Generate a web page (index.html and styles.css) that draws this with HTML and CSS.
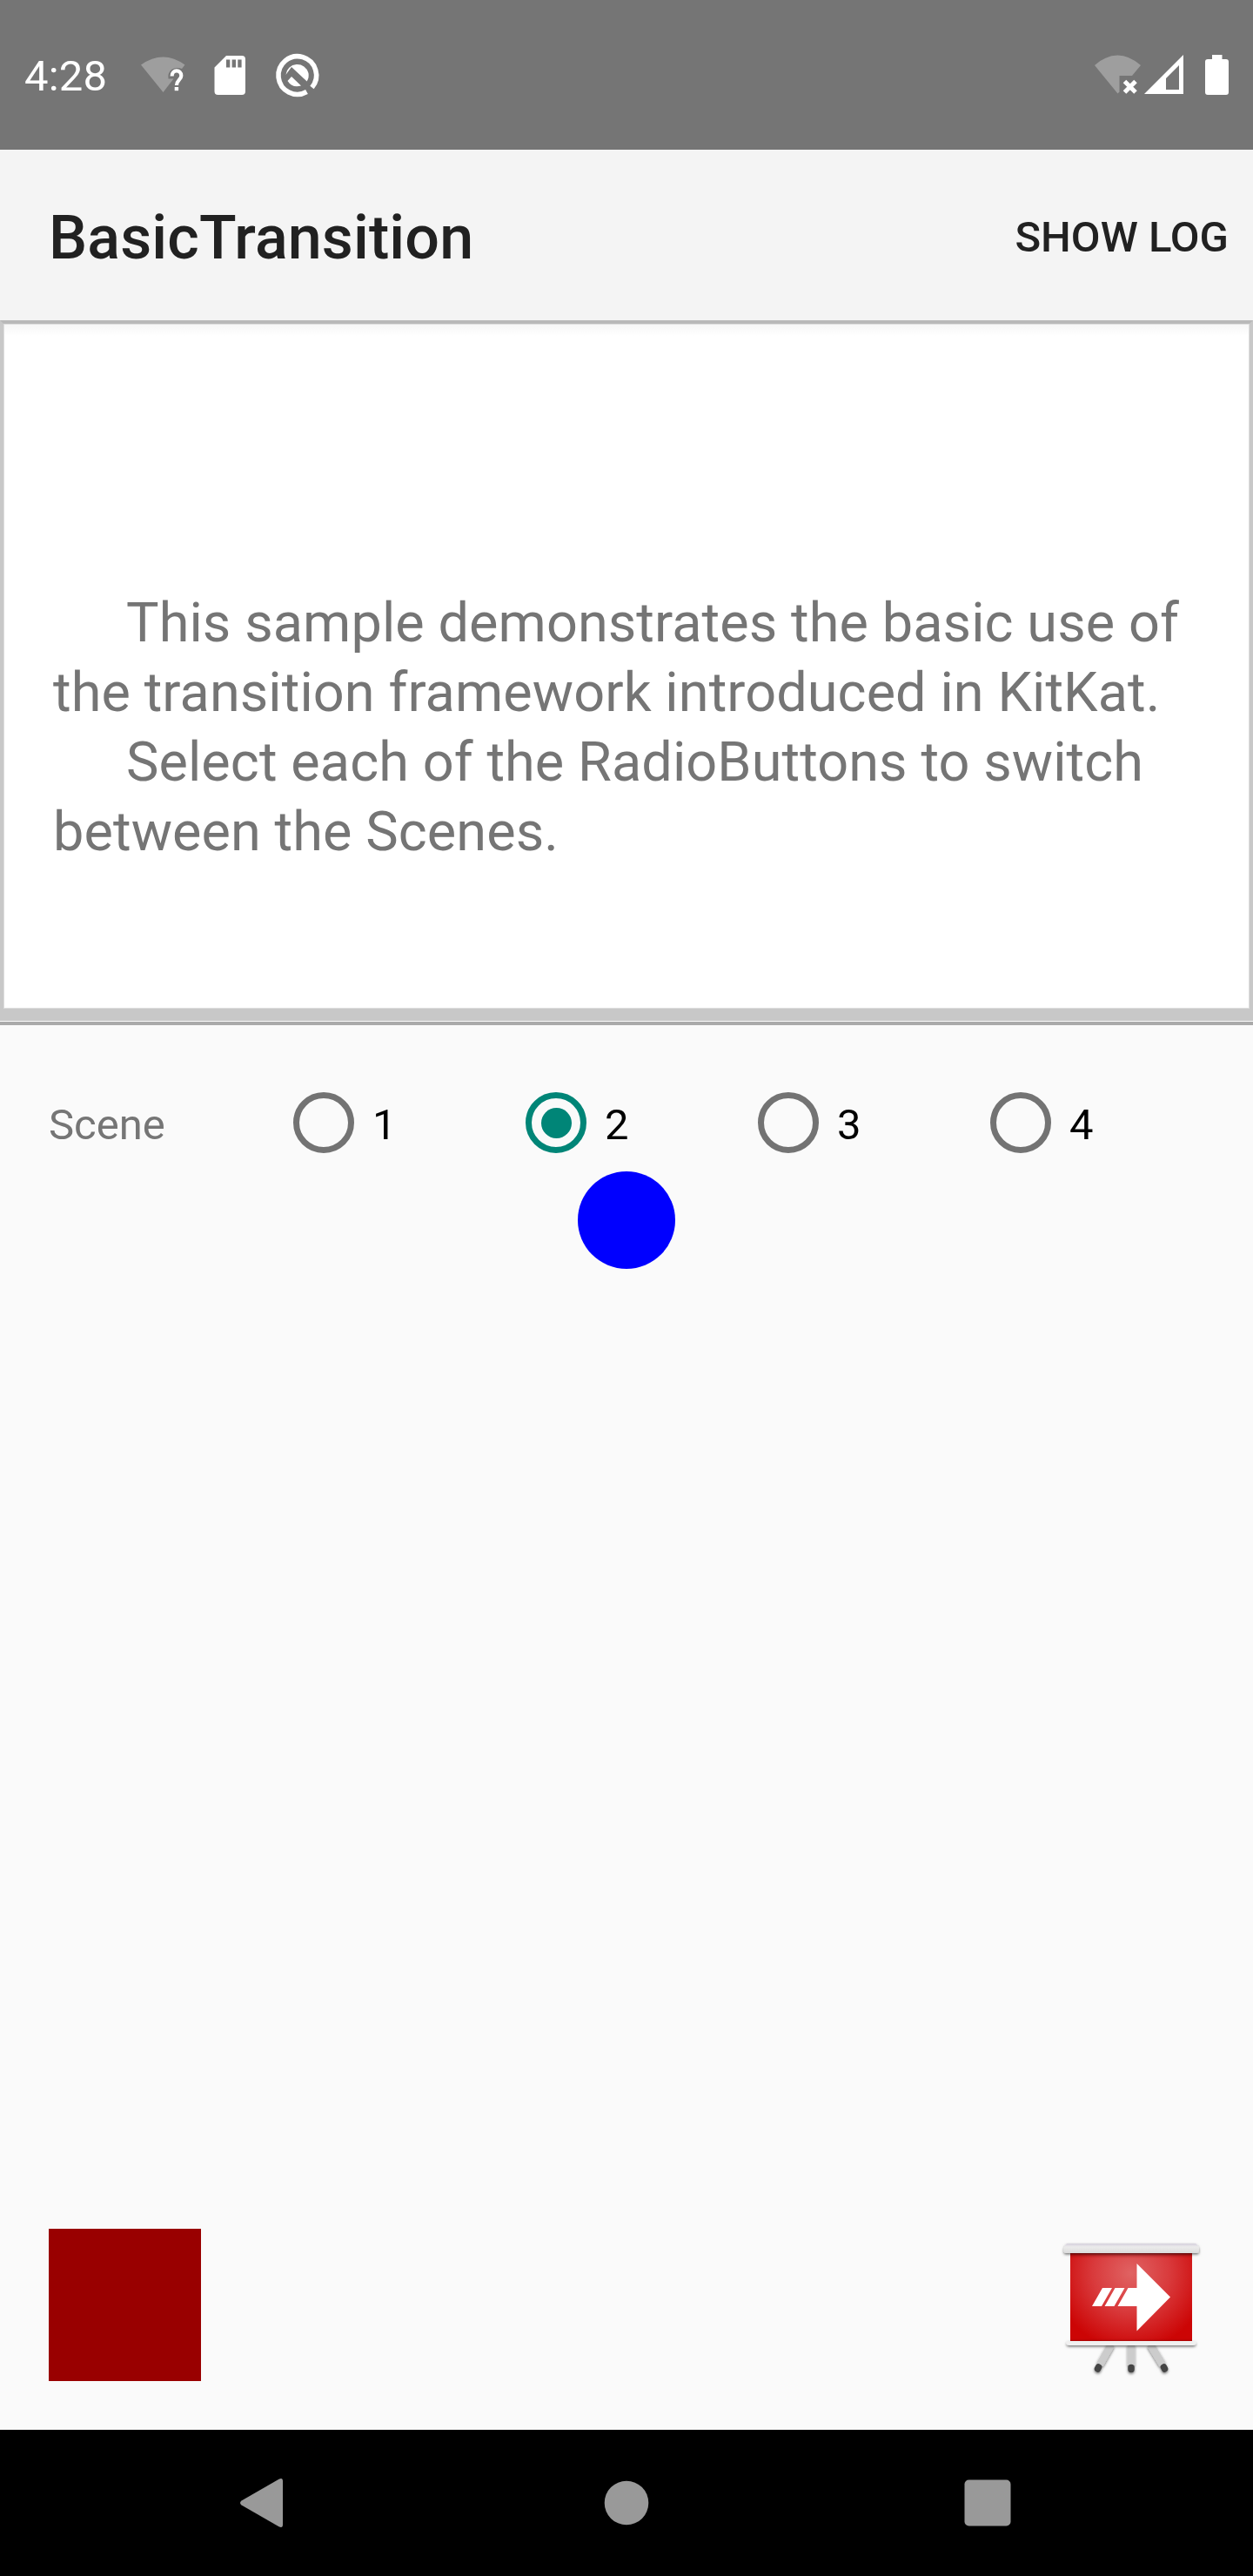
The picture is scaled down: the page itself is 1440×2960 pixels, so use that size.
FILE: index.html
```html
<!DOCTYPE html>
<html lang="en">
<head>
<meta charset="utf-8">
<title>BasicTransition</title>
<link rel="stylesheet" href="styles.css">
</head>
<body>
<header class="status">
  <span class="clock">4:28</span>
  <svg class="notifications" width="220" height="60" viewBox="155 56 220 60">
    <path fill="#9e9e9e" d="M162 74.500Q187.500 56.500 212.500 74.500L209 79Q203 76.500 197 80Q192.500 84 193.500 90.500H199.500L187.500 106Z"/>
    <path fill="none" stroke="#fff" stroke-width="4.200" d="M197.600 87.500C197.600 79.500 208.300 79.500 208.300 87C208.300 91.500 203 92 203 98"/>
    <path fill="#fff" d="M200.700 100h4.400v4.200h-4.400z"/>
    <path fill="#fff" fill-rule="evenodd" d="M260 64H278Q282 64 282 68V105Q282 109 278 109H250.500Q246.500 109 246.500 105V77.500ZM260 68.500V77.500H264.300V68.500ZM266.600 68.500V77.500H271V68.500ZM273.300 68.500V77.500H277.600V68.500Z"/>
    <path fill="none" stroke="#fff" stroke-width="5.600" d="M352.500 105.500A21.800 21.800 0 1 1 358.500 100.500"/>
    <path fill="#fff" d="M328.400 86A13.300 13.300 0 0 1 354.500 84Q355.500 89 352.700 93.500L335 77Z"/>
    <path fill="#fff" d="M330.500 93L335 88L346 98.500Q336 101.500 330.500 93Z"/>
  </svg>
  <svg class="system" width="160" height="60" viewBox="1254 56 160 60">
    <path fill="#9e9e9e" d="M1258 75Q1284.500 52 1311 75L1301 87H1286.500V105.500L1284.500 107.500Z"/>
    <path stroke="#fff" stroke-width="5" d="M1292.500 93.500L1305 106M1305 93.500L1292.500 106"/>
    <path fill="#fff" fill-rule="evenodd" d="M1315 108L1360 63V108ZM1340 90V103H1355V75Z"/>
    <path fill="#fff" d="M1393 63H1404.500V68H1409Q1412 68 1412 71V106Q1412 109 1409 109H1388Q1385 109 1385 106V71Q1385 68 1388 68H1393Z"/>
  </svg>
</header>
<div class="appbar">
  <h1 class="title">BasicTransition</h1>
  <button class="action">SHOW LOG</button>
</div>
<section class="card">
  <p class="intro">This sample demonstrates the basic use of<br>the transition framework introduced in KitKat.</p>
  <p class="intro">Select each of the RadioButtons to switch<br>between the Scenes.</p>
</section>
<div class="divider"></div>
<div class="scenes">
  <span class="label">Scene</span>
  <div class="option"><span class="radio"></span><span class="number">1</span></div>
  <div class="option"><span class="radio checked"></span><span class="number">2</span></div>
  <div class="option"><span class="radio"></span><span class="number">3</span></div>
  <div class="option"><span class="radio"></span><span class="number">4</span></div>
</div>
<main class="stage">
  <div class="ball"></div>
  <div class="shapes">
    <div class="square"></div>
    <svg width="175" height="175" viewBox="12 11 175 175">
      <defs>
        <radialGradient id="screen" gradientUnits="userSpaceOnUse" cx="100" cy="62" r="88">
          <stop offset="0" stop-color="#e06363"/><stop offset=".5" stop-color="#d93a3c"/><stop offset="1" stop-color="#cc0505"/>
        </radialGradient>
        <linearGradient id="shade" x2="0" y2="1">
          <stop offset="0" stop-color="#900" stop-opacity=".6"/><stop offset=".08" stop-color="#900" stop-opacity="0"/>
          <stop offset=".96" stop-color="#900" stop-opacity="0"/><stop offset="1" stop-color="#900" stop-opacity=".5"/>
        </linearGradient>
        <linearGradient id="roller" x2="0" y2="1">
          <stop offset="0" stop-color="#d5d0dd"/><stop offset=".35" stop-color="#ebebeb"/><stop offset="1" stop-color="#dcdcdc"/>
        </linearGradient>
        <filter id="drop" x="-10%" y="-50%" width="120%" height="250%"><feDropShadow dx="0" dy="1.500" stdDeviation="1.500" flood-opacity=".55"/></filter>
      </defs>
      <g filter="url(#drop)">
        <path stroke="#ccc" stroke-width="8.500" d="M77 144L64 167M100 144V168M122 144L136 167"/>
        <path stroke="#444" stroke-width="7.500" stroke-linecap="round" d="M62.500 170L61.500 172M100 170.500V172.500M137.500 170L138.500 172"/>
      </g>
      <path fill="url(#screen)" d="M30 37h140v104H30z"/>
      <path fill="url(#shade)" d="M30 37h140v104H30z"/>
      <path filter="url(#drop)" fill="url(#roller)" d="M26 28H174Q178 31 178 34V36.500Q178 39 175 39H25Q22.500 39 22.500 36.500V34Q22.500 31 26 28Z"/>
      <path filter="url(#drop)" fill="#f0f0f0" d="M28 140H172L174.500 141.500V143Q174 145 171 145H29Q26 145 25.500 143V141.500Z"/>
      <path fill="#fff" d="M55 100L67 79H78L66 100ZM69.500 100L81.500 79H92.500L80.500 100ZM84.500 100L96.500 79H106.500V51L145 89.500L106.500 128.500V100Z"/>
    </svg>
  </div>
</main>
<nav class="nav">
  <svg width="1440" height="168" viewBox="0 2792 1440 168" fill="#999">
    <path d="M277.500 2873.500L320.500 2848.700Q325 2846.500 325 2851V2901Q325 2905.500 320.500 2903.300L277.500 2878.500Q274.500 2876 277.500 2873.500Z"/>
    <circle cx="720" cy="2876" r="25.300"/>
    <rect x="1108.500" y="2849.500" width="53" height="53" rx="5"/>
  </svg>
</nav>
</body>
</html>
```
FILE: styles.css
```css
* { box-sizing: border-box; }
body {
  margin: 0;
  width: 1440px;
  height: 2960px;
  display: flex;
  flex-direction: column;
  background: #fafafa;
  font-family: Roboto, sans-serif;
  overflow: hidden;
}
svg { display: block; }
.status {
  height: 172px;
  flex: none;
  display: flex;
  padding: 56px 26px 0 28px;
  background: #757575;
  color: #fff;
}
.clock { width: 127px; font-size: 49px; line-height: 64px; letter-spacing: .2px; }
.system { margin-left: auto; }
.appbar {
  height: 196px;
  flex: none;
  display: flex;
  align-items: center;
  justify-content: space-between;
  padding: 6px 28px 0 56px;
  background: #f4f4f4;
  color: #212121;
}
.title { margin: 0; font-size: 70px; font-weight: 500; letter-spacing: .12px; }
.action {
  margin-bottom: 2px;
  padding: 0;
  border: 0;
  background: none;
  color: #212121;
  font: 500 49px Roboto, sans-serif;
}
.card {
  height: 805px;
  flex: none;
  padding: 304px 0 0 57px;
  border: solid #c8c8c8;
  border-width: 4px 4px 14px;
  border-top-color: #b9b9b9;
  background: linear-gradient(#f6f6f6, #fff 14px);
  box-shadow: inset 0 0 0 1px #dedede;
  color: #757575;
}
.intro {
  margin: 0;
  font-size: 63px;
  line-height: 80px;
  letter-spacing: .08px;
  text-indent: 84px;
  white-space: nowrap;
}
.divider { height: 5px; flex: none; border-top: 1px solid #fafafa; background: #aaa; }
.scenes {
  height: 168px;
  flex: none;
  display: flex;
  align-items: center;
  padding: 56px 0 0 56px;
  font-size: 49px;
  color: #000;
}
.label { width: 281px; padding-top: 5px; color: #757575; }
.option { width: 267px; display: flex; align-items: center; gap: 21px; }
.number { padding-top: 5px; }
.radio {
  width: 70px;
  height: 70px;
  display: grid;
  place-items: center;
  border: 7px solid #737373;
  border-radius: 50%;
}
.checked { border-color: #008577; }
.checked::after { content: ""; width: 35px; height: 35px; border-radius: 50%; background: #008577; }
.stage {
  flex: 1;
  display: flex;
  flex-direction: column;
  justify-content: space-between;
  padding: 0 53px 56px 56px;
}
.ball { width: 112px; height: 112px; margin-left: 608px; background: #00f; border-radius: 50%; }
.shapes { display: flex; justify-content: space-between; }
.square { width: 175px; height: 175px; background: #900; }
.nav { height: 168px; flex: none; background: #000; }
```
